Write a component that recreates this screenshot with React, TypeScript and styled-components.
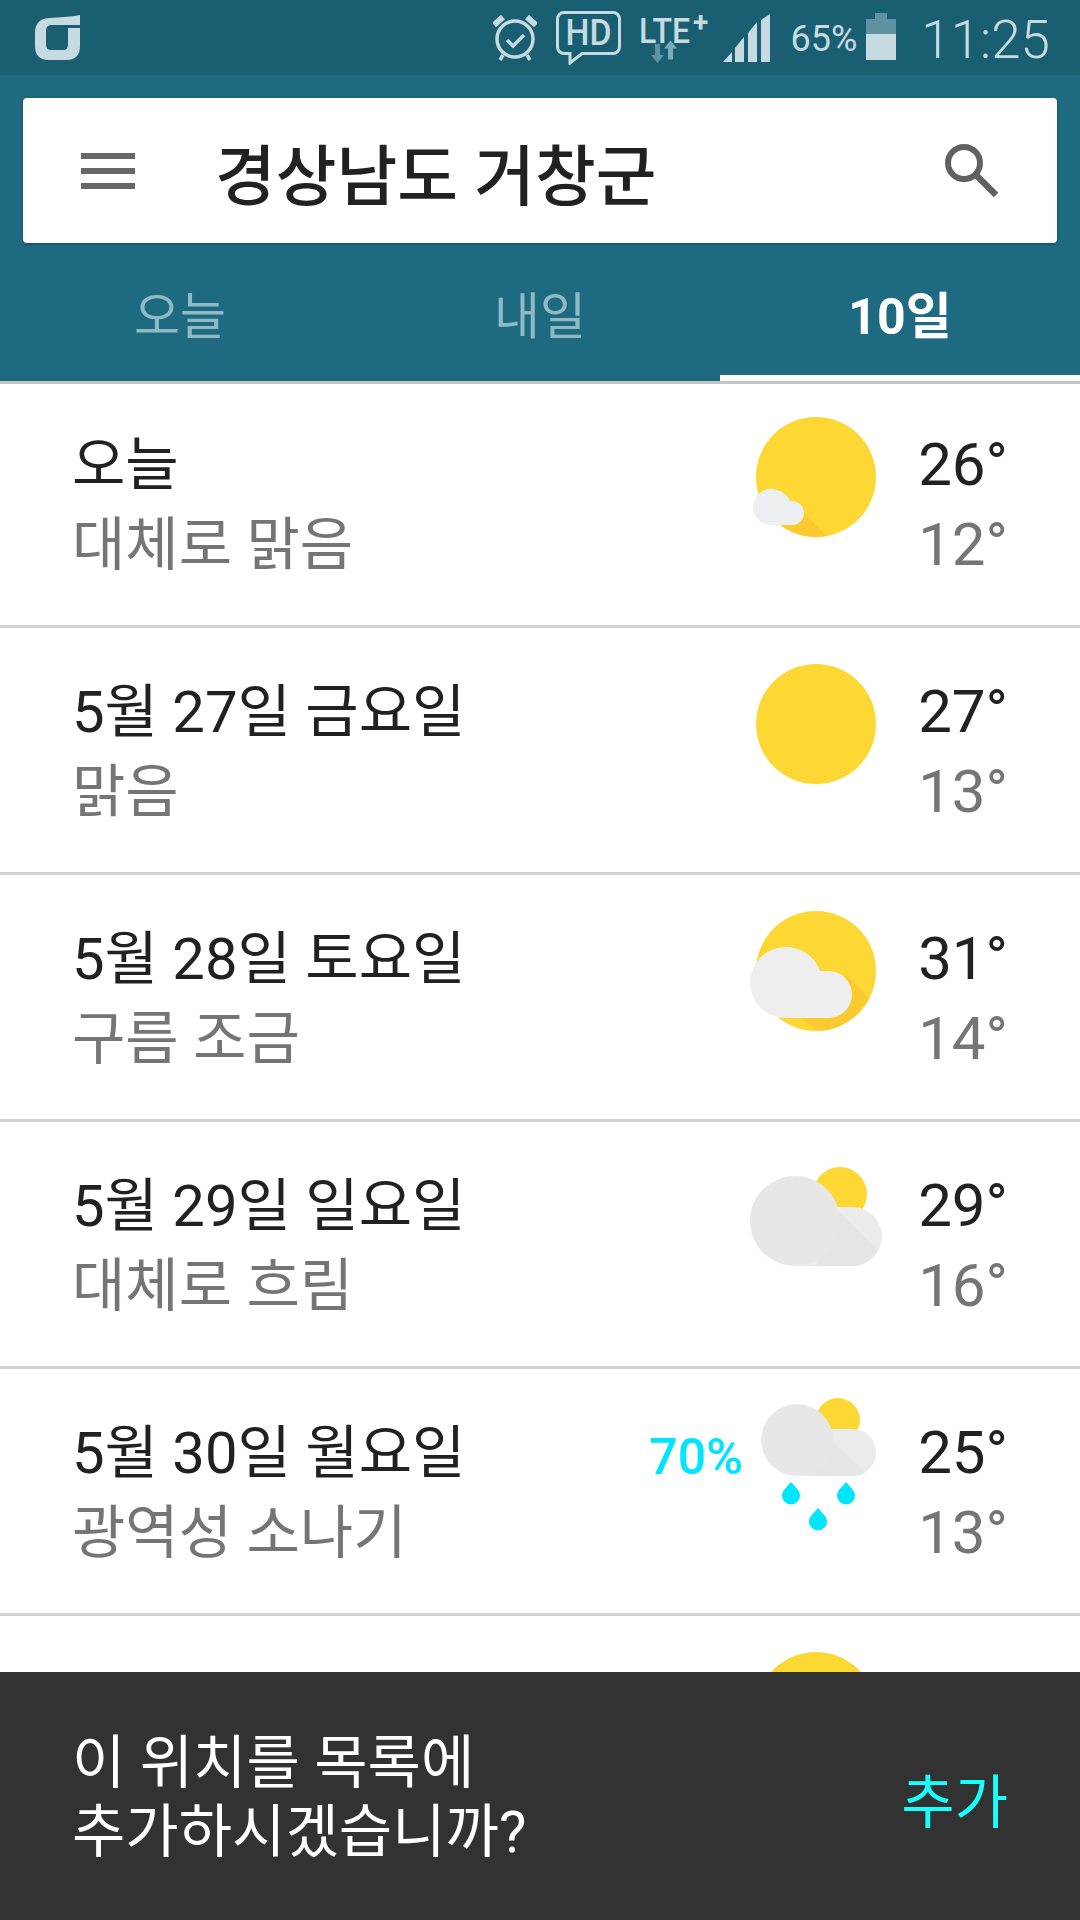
import React from 'react';
import styled, { createGlobalStyle } from 'styled-components';

const days = [
  { title: '오늘', desc: '대체로 맑음', high: '26°', low: '12°', icon: 'smallCloud' },
  { title: '5월 27일 금요일', desc: '맑음', high: '27°', low: '13°', icon: 'sun' },
  { title: '5월 28일 토요일', desc: '구름 조금', high: '31°', low: '14°', icon: 'partly' },
  { title: '5월 29일 일요일', desc: '대체로 흐림', high: '29°', low: '16°', icon: 'mostly' },
  { title: '5월 30일 월요일', desc: '광역성 소나기', high: '25°', low: '13°', icon: 'rain', chance: '70%' },
  { title: '', desc: '', high: '', low: '', icon: 'sun' },
];

const Sun: React.FC<{ shadow?: string }> = ({ shadow }) => (
  <>
    <clipPath id="sun-clip">
      <circle cx="70" cy="70" r="60" />
    </clipPath>
    <circle cx="70" cy="70" r="60" fill="#fdd835" />
    {shadow && <path d={shadow} fill="#f9c02c" opacity="0.55" clipPath="url(#sun-clip)" />}
  </>
);

const WeatherIcon: React.FC<{ kind: string }> = ({ kind }) => (
  <IconSvg viewBox="0 0 140 140">
    {kind === 'sun' && <Sun />}
    {kind === 'smallCloud' && (
      <>
        <Sun shadow="M50 98L90 138H40L30 118z" />
        <path d="M7 100a18 18 0 0 1 18-18c9 0 16 5 19 12h2a12 12 0 0 1 0 24H25A18 18 0 0 1 7 100z" fill="#eceff1" />
      </>
    )}
    {kind === 'partly' && (
      <>
        <Sun shadow="M100 74L145 119L100 150L55 117z" />
        <path d="M4 81.500A35.500 35.500 0 0 1 39.500 46c16 0 30 10 34.500 24h8.500a23.500 23.500 0 0 1 0 47h-43A35.500 35.500 0 0 1 4 81.500z" fill="#eeeeee" />
      </>
    )}
    {kind === 'mostly' && (
      <>
        <circle cx="94" cy="46" r="27" fill="#fdd835" />
        <path d="M49 118V59h57.500a29.500 29.500 0 0 1 0 59z" fill="#ebebeb" />
        <path d="M92 62L132 102a29.500 29.500 0 0 1-25.500 16H70z" fill="#e3e3e3" opacity="0.6" />
        <circle cx="49" cy="73" r="45" fill="#e7e7e7" />
      </>
    )}
    {kind === 'rain' && (
      <>
        <circle cx="92" cy="25" r="22" fill="#fdd835" />
        <path d="M51 81V34h55.500a23.500 23.500 0 0 1 0 47z" fill="#ebebeb" />
        <path d="M86 46L120 78a23.500 23.500 0 0 1-13.500 3H62z" fill="#e3e3e3" opacity="0.6" />
        <circle cx="51" cy="45" r="36" fill="#e7e7e7" />
        <path d="M45 87c-5 6-9 9-9 13.500a9 9 0 0 0 18 0c0-4.500-4-7.500-9-13.500z" fill="#00e5ff" />
        <path d="M100 87c-5 6-9 9-9 13.500a9 9 0 0 0 18 0c0-4.500-4-7.500-9-13.500z" fill="#00e5ff" />
        <path d="M72 113c-5 6-9 9-9 13.500a9 9 0 0 0 18 0c0-4.500-4-7.500-9-13.500z" fill="#00e5ff" />
      </>
    )}
  </IconSvg>
);

const App: React.FC = () => (
  <Screen>
    <GlobalStyle />
    <StatusBar>
      <Logo viewBox="0 0 45 45">
        <path d="M45 0v10H16q-5 0-5 6v14q0 5 5 5h12q5 0 5-5V13h12v18q0 14-14 14H14Q0 45 0 31V18Q0 4 14 3c11-1 21-1 31-3z" fill="#c5dbe1" />
      </Logo>
      <StatusIcons>
        <svg width="44" height="46" viewBox="0 0 44 46" fill="none" stroke="#c5dbe1">
          <circle cx="22" cy="24" r="18" strokeWidth="3.500" />
          <path d="M14 25l6 6 11-11" strokeWidth="3.500" />
          <path d="M1 10L10 2M43 10L34 2" strokeWidth="6" />
          <path d="M10 40l-3 5M34 40l3 5" strokeWidth="3.500" />
        </svg>
        <HdIcon width="65" height="54" viewBox="0 0 65 54">
          <path d="M8 1.500h49a6.500 6.500 0 0 1 6.500 6.500v28a6.500 6.500 0 0 1-6.500 6.500H26L14 52V42.500H8A6.500 6.500 0 0 1 1.500 36V8A6.500 6.500 0 0 1 8 1.500z" fill="none" stroke="#c5dbe1" strokeWidth="3" />
          <text x="32.500" y="34" textAnchor="middle" fontFamily="Roboto, sans-serif" fontSize="36" fontWeight="500" fill="#c5dbe1" textLength="46" lengthAdjust="spacingAndGlyphs">HD</text>
        </HdIcon>
        <LteIcon width="71" height="64" viewBox="0 0 71 64">
          <text x="0" y="37" fontFamily="Roboto, sans-serif" fontSize="35" fontWeight="500" fill="#c5dbe1" textLength="51" lengthAdjust="spacingAndGlyphs">LTE</text>
          <text x="54" y="26" fontFamily="Roboto, sans-serif" fontSize="28" fontWeight="700" fill="#c5dbe1">+</text>
          <path d="M16 38h5v11h4l-6.500 8-6.500-8h4z" fill="#5f93a4" />
          <path d="M31.500 34.500l6.500 8h-4v11h-5v-11h-4z" fill="#80acba" />
        </LteIcon>
        <SignalIcon width="47" height="48" viewBox="0 0 47 48" fill="#c5dbe1">
          <path d="M0 48L9 38v10zM12 48V34l9-11v25zM25 48V19l9-11v40zM38 48V6l9-6v48z" />
        </SignalIcon>
        <BatteryPercent>65%</BatteryPercent>
        <Battery>
          <BatteryCap />
          <BatteryBody />
        </Battery>
        <Clock>11:25</Clock>
      </StatusIcons>
    </StatusBar>
    <Header>
      <SearchCard>
        <MenuIcon viewBox="0 0 54 36">
          <path d="M0 0h54v6H0zM0 15h54v6H0zM0 30h54v6H0z" fill="#666" />
        </MenuIcon>
        <Location>경상남도 거창군</Location>
        <SearchIcon viewBox="0 0 54 54" fill="none" stroke="#616161">
          <circle cx="19" cy="19" r="16" strokeWidth="6" />
          <path d="M31 31l20 20" strokeWidth="6.500" />
        </SearchIcon>
      </SearchCard>
      <Tabs>
        <Tab>오늘</Tab>
        <Tab>내일</Tab>
        <Tab $active>10일</Tab>
      </Tabs>
    </Header>
    <List>
      {days.map((d, i) => (
        <Row key={i}>
          <RowText>
            <DayTitle>{d.title}</DayTitle>
            <DayDesc>{d.desc}</DayDesc>
          </RowText>
          {d.chance && <Chance>{d.chance}</Chance>}
          <WeatherIcon kind={d.icon} />
          <Temps>
            <High>{d.high}</High>
            <Low>{d.low}</Low>
          </Temps>
        </Row>
      ))}
    </List>
    <Snackbar>
      <SnackText>
        이 위치를 목록에
        <br />
        추가하시겠습니까?
      </SnackText>
      <SnackAction>추가</SnackAction>
    </Snackbar>
  </Screen>
);

export default App;

const GlobalStyle = createGlobalStyle`
  html, body {
    margin: 0;
    padding: 0;
    background: #fff;
  }
`;

const Screen = styled.div`
  position: relative;
  width: 1080px;
  height: 1920px;
  overflow: hidden;
  font-family: Roboto, 'Noto Sans CJK KR', sans-serif;
  background: #fff;
`;

const StatusBar = styled.div`
  height: 75px;
  background: #1a5e72;
  display: flex;
  align-items: center;
  justify-content: space-between;
  padding: 0 30px 0 35px;
  box-sizing: border-box;
`;

const Logo = styled.svg`
  width: 45px;
  height: 45px;
`;

const StatusIcons = styled.div`
  display: flex;
  align-items: center;
`;

const HdIcon = styled.svg`
  margin-left: 19px;
`;

const LteIcon = styled.svg`
  margin-left: 18px;
`;

const SignalIcon = styled.svg`
  margin-left: 13px;
`;

const BatteryPercent = styled.span`
  font-size: 36px;
  line-height: 44px;
  color: #c5dbe1;
  margin-left: 20px;
  padding-top: 2px;
`;

const Battery = styled.div`
  display: flex;
  flex-direction: column;
  align-items: center;
  width: 30px;
  height: 47px;
  margin: -3px 0 0 9px;
`;

const BatteryCap = styled.div`
  width: 12px;
  height: 6px;
  background: #5f93a4;
`;

const BatteryBody = styled.div`
  width: 30px;
  flex: 1;
  background: linear-gradient(#5f93a4 0 15px, #c5dbe1 15px);
`;

const Clock = styled.span`
  font-size: 53px;
  line-height: 64px;
  font-weight: 300;
  color: #c5dbe1;
  margin-left: 25px;
  padding-top: 5px;
`;

const Header = styled.div`
  background: #1e6a80;
  height: 306px;
  padding-top: 23px;
  box-sizing: border-box;
  display: flex;
  flex-direction: column;
`;

const SearchCard = styled.div`
  margin: 0 23px;
  height: 145px;
  flex: none;
  background: #fff;
  border-radius: 4px;
  box-shadow: 0 1px 3px rgba(0, 0, 0, 0.35);
  display: flex;
  align-items: center;
  padding: 0 58px;
`;

const MenuIcon = styled.svg`
  width: 54px;
  height: 36px;
  flex: none;
`;

const Location = styled.div`
  flex: 1;
  margin-left: 80px;
  font-size: 66px;
  font-weight: 500;
  color: #212121;
`;

const SearchIcon = styled.svg`
  width: 54px;
  height: 54px;
  flex: none;
`;

const Tabs = styled.div`
  flex: 1;
  display: flex;
`;

const Tab = styled.div<{ $active?: boolean }>`
  flex: 1;
  display: flex;
  align-items: center;
  justify-content: center;
  padding-top: 6px;
  font-size: 50px;
  font-weight: ${(p) => (p.$active ? 700 : 400)};
  color: ${(p) => (p.$active ? '#fff' : '#8fb9c5')};
  border-bottom: 6px solid ${(p) => (p.$active ? '#fff' : 'transparent')};
`;

const List = styled.div`
  border-top: 3px solid #c4c4c4;
`;

const Row = styled.div`
  height: 247px;
  box-sizing: border-box;
  border-bottom: 3px solid #d2d2d2;
  display: flex;
  align-items: flex-start;
  padding: 26px 72px 0;

  &:first-child {
    height: 244px;
    padding-top: 23px;
  }
`;

const RowText = styled.div`
  flex: 1;
  display: flex;
  flex-direction: column;
  gap: 10px;
  margin-top: 23px;
`;

const DayTitle = styled.div`
  font-size: 58px;
  color: #212121;
  line-height: 70px;
  min-height: 70px;
`;

const DayDesc = styled.div`
  font-size: 58px;
  color: #757575;
  line-height: 70px;
  min-height: 70px;
`;

const Chance = styled.div`
  font-size: 50px;
  line-height: 60px;
  font-weight: 500;
  color: #00e5ff;
  margin: 32px 3px 0 0;
`;

const IconSvg = styled.svg`
  width: 140px;
  height: 140px;
  flex: none;
  margin-right: 35px;
`;

const Temps = styled.div`
  width: 87px;
  flex: none;
  display: flex;
  flex-direction: column;
  align-items: flex-end;
  gap: 10px;
  margin-top: 23px;
`;

const High = styled.div`
  font-size: 60px;
  color: #212121;
  line-height: 70px;
  white-space: nowrap;
`;

const Low = styled.div`
  font-size: 60px;
  color: #757575;
  line-height: 70px;
  white-space: nowrap;
`;

const Snackbar = styled.div`
  position: absolute;
  left: 0;
  right: 0;
  bottom: 0;
  height: 248px;
  background: #323232;
  display: flex;
  align-items: center;
  justify-content: space-between;
  padding: 4px 72px 0;
  box-sizing: border-box;
`;

const SnackText = styled.div`
  font-size: 58px;
  line-height: 69px;
  color: #fff;
`;

const SnackAction = styled.div`
  font-size: 58px;
  color: #18ffff;
`;
